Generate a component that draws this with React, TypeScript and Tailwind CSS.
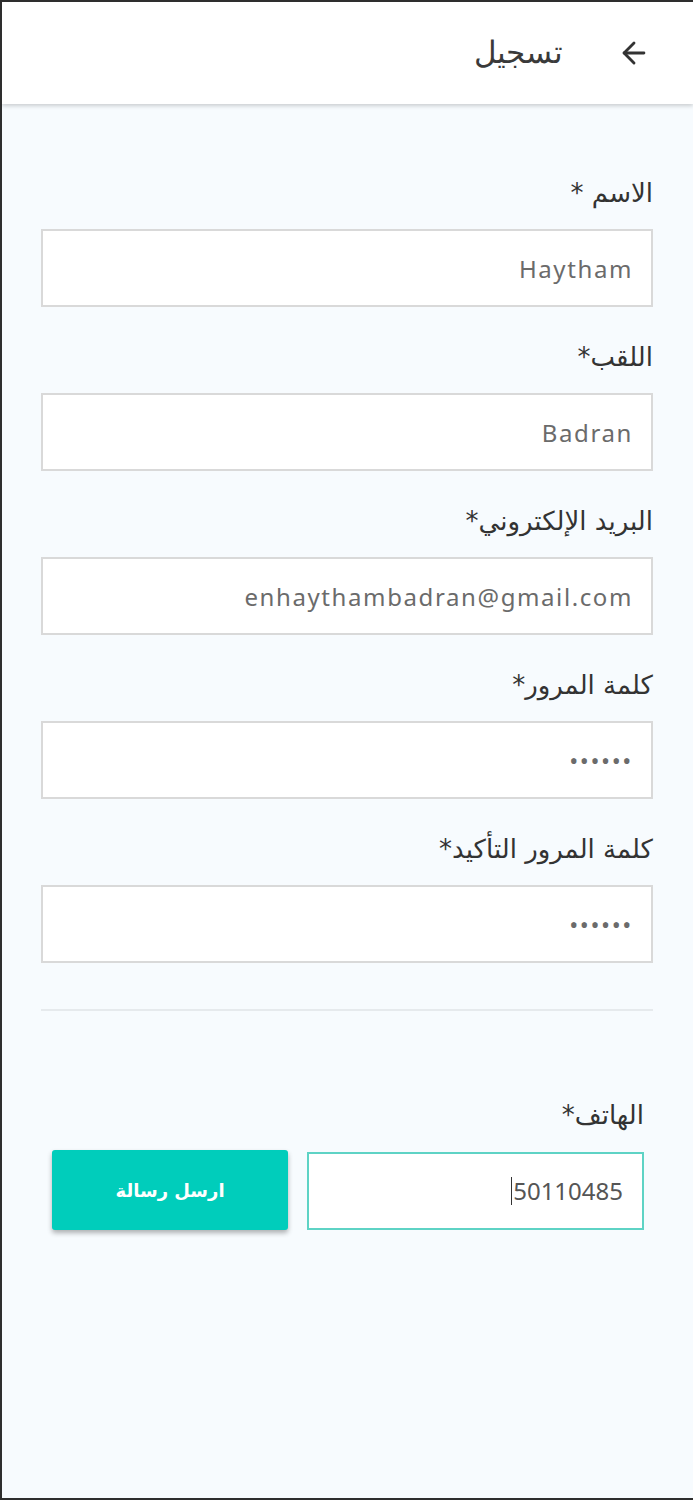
import { ArrowLeft } from 'lucide-react'

const fields = [
  { label: 'الاسم *', value: 'Haytham', type: 'text' },
  { label: 'اللقب*', value: 'Badran', type: 'text' },
  { label: 'البريد الإلكتروني*', value: 'enhaythambadran@gmail.com', type: 'email' },
  { label: 'كلمة المرور*', value: '123456', type: 'password' },
  { label: 'كلمة المرور التأكيد*', value: '123456', type: 'password' },
]

const arabic = { fontFamily: '"DejaVu Sans", "Noto Sans", sans-serif' }
const latin = { fontFamily: '"Noto Sans", "Open Sans", sans-serif' }

export default function App() {
  return (
    <div className="h-[1500px] w-[693px] overflow-hidden border-t-2 border-l-2 border-b-2 border-[#2e2e2e] bg-[#f7fbfe] flex flex-col">
      <header dir="rtl" className="h-[102px] shrink-0 bg-white shadow-[0_2px_4px_rgba(0,0,0,0.18)] flex items-center gap-[54px] pr-[42px] z-10">
        <ArrowLeft className="w-[34px] h-[34px] text-[#333] shrink-0" strokeWidth={2} />
        <h1 className="text-[31px] font-light text-[#3a3a3a] leading-none pb-[2px]" style={arabic}>تسجيل</h1>
      </header>

      <main dir="rtl" className="flex flex-col pt-[73px] pr-[40px] pl-[39px]">
        {fields.map((f) => (
          <div key={f.label} className="flex flex-col mb-[34px]">
            <label className="text-[26px] leading-[32px] text-[#333] mb-[20px]" style={arabic}>{f.label}</label>
            <input
              readOnly
              type={f.type}
              value={f.value}
              dir="ltr"
              className="h-[78px] w-full bg-white border-2 border-[#d9d9d9] text-right pr-[18px] text-[24px] tracking-[1.6px] text-[#6b6b6b] outline-none"
              style={latin}
            />
          </div>
        ))}

        <div className="h-[2px] bg-[#e6eaed] mt-[12px]" />

        <div className="flex flex-col pr-[9px] pl-[11px] mt-[88px]">
          <label className="text-[26px] leading-[32px] text-[#333] mb-[21px]" style={arabic}>الهاتف*</label>
          <div className="flex items-center gap-[19px]">
            <div dir="ltr" className="h-[78px] w-[338px] bg-white border-2 border-[#5ed3c5] flex items-center justify-end pr-[19px] text-[24px] text-[#555]" style={latin}>
              <span className="w-[1px] h-[28px] bg-[#333] mr-[1px]" />
              <span>50110485</span>
            </div>
            <button
              type="button"
              className="h-[80px] w-[237px] rounded-[3px] bg-[#00cdbb] text-white text-[18px] font-bold shadow-[0_3px_5px_rgba(0,0,0,0.3)] mt-[-2px]"
              style={arabic}
            >
              ارسل رسالة
            </button>
          </div>
        </div>
      </main>
    </div>
  )
}
